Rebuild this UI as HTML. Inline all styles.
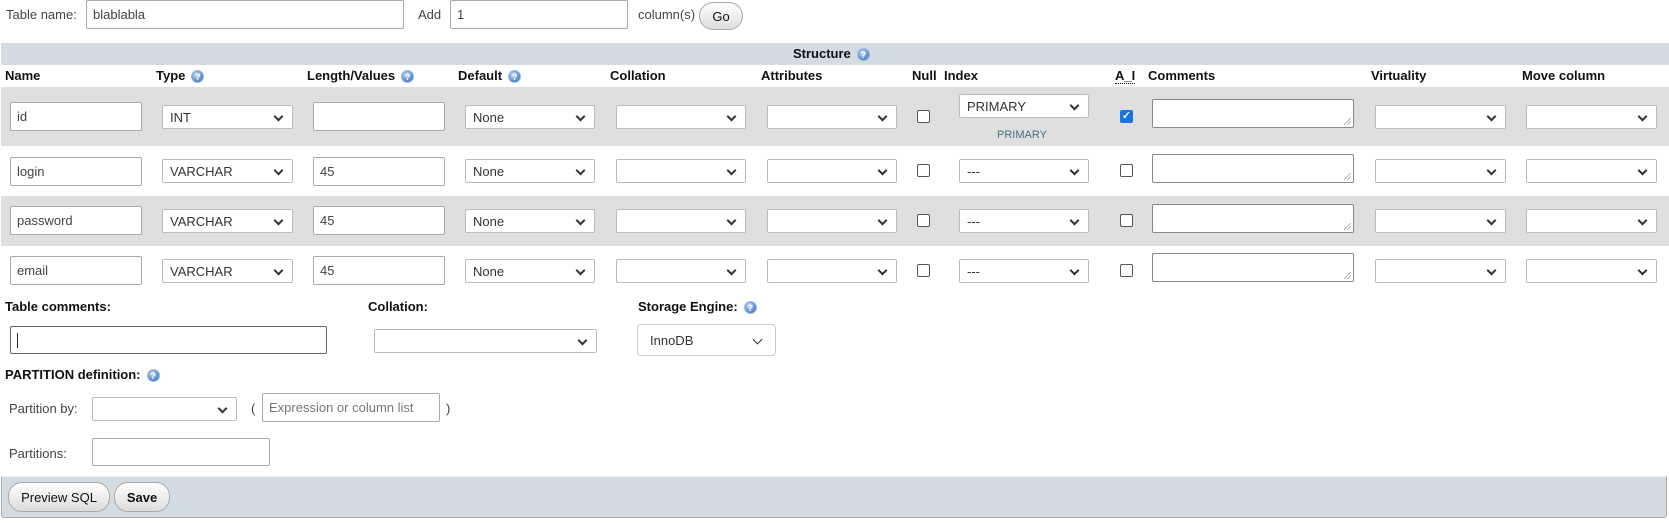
<!DOCTYPE html>
<html><head><meta charset="utf-8">
<style>
*{box-sizing:border-box;margin:0;padding:0}
body{width:1669px;height:523px;background:#fff;font-family:"Liberation Sans",Arial,sans-serif;font-size:13px;color:#222;position:relative;overflow:hidden}
.a{position:absolute}
.in{position:absolute;background:#fff;border:1px solid #aaa;border-radius:2px;padding-left:6px;font-size:13px;color:#444;display:flex;align-items:center}
.sel{position:absolute;background:#fff;border:1px solid #bbb;border-radius:2px;padding-left:7px;font-size:13px;color:#333;display:flex;align-items:center;height:24px}
.sel:after{content:"";position:absolute;right:10px;top:7px;width:5px;height:5px;border-right:2px solid #333;border-bottom:2px solid #333;transform:rotate(45deg)}
.sel.eng:after{top:11px;right:14px;border-width:1.5px;width:6px;height:6px}
.ta{position:absolute;background:#fff;border:1px solid #888;border-radius:2px;width:202px;height:29px}
.ta:after{content:"";position:absolute;right:2px;bottom:2px;width:7px;height:7px;background:linear-gradient(135deg,transparent 45%,#999 45%,#999 52%,transparent 52%,transparent 70%,#999 70%,#999 77%,transparent 77%)}
.cb{position:absolute;width:13px;height:13px;border:1px solid #555;border-radius:2px;background:#fff}
.h{position:absolute;font-weight:bold;font-size:13px;color:#111}
.hi{display:inline-block;width:13px;height:13px;border-radius:50%;background:radial-gradient(circle at 40% 35%,#cfe0f5,#5b8fd0 60%,#3d6fb3);color:#fff;font-size:9px;font-weight:bold;text-align:center;line-height:13px;vertical-align:middle;margin-left:6px;border:1px solid #9fb9dd}
.row{position:absolute;left:1px;width:1668px;background:#dfdfdf}
.btn{position:absolute;border:1px solid #aaa;border-radius:14px;background:linear-gradient(#fff,#ddd);font-size:13px;color:#111;display:flex;align-items:center;justify-content:center}
</style></head><body>

<div class="a" style="left:6px;top:7px;color:#444">Table name:</div>
<div class="in" style="left:86px;top:0;width:318px;height:29px">blablabla</div>
<div class="a" style="left:418px;top:7px;color:#444">Add</div>
<div class="in" style="left:450px;top:0;width:178px;height:29px">1</div>
<div class="a" style="left:638px;top:7px;color:#444">column(s)</div>
<div class="btn" style="left:699px;top:2px;width:44px;height:28px">Go</div>

<div class="a" style="left:1px;top:43px;width:1668px;height:22px;background:#d3dce3"></div>
<div class="h" style="left:793px;top:46px">Structure<span class="hi">?</span></div>

<div class="h" style="left:5px;top:68px">Name</div>
<div class="h" style="left:156px;top:68px">Type<span class="hi">?</span></div>
<div class="h" style="left:307px;top:68px">Length/Values<span class="hi">?</span></div>
<div class="h" style="left:458px;top:68px">Default<span class="hi">?</span></div>
<div class="h" style="left:610px;top:68px">Collation</div>
<div class="h" style="left:761px;top:68px">Attributes</div>
<div class="h" style="left:912px;top:68px">Null</div>
<div class="h" style="left:944px;top:68px">Index</div>
<div class="h" style="left:1115px;top:68px;border-bottom:1px dotted #111">A_I</div>
<div class="h" style="left:1148px;top:68px">Comments</div>
<div class="h" style="left:1371px;top:68px">Virtuality</div>
<div class="h" style="left:1522px;top:68px">Move column</div>

<div class="row" style="top:87px;height:59px"></div>
<div class="row" style="top:196px;height:50px"></div>

<!-- row1 -->
<div class="in" style="left:10px;top:102px;width:132px;height:29px">id</div>
<div class="sel" style="left:162px;top:105px;width:131px">INT</div>
<div class="in" style="left:313px;top:102px;width:132px;height:29px"></div>
<div class="sel" style="left:465px;top:105px;width:130px">None</div>
<div class="sel" style="left:616px;top:105px;width:130px"></div>
<div class="sel" style="left:767px;top:105px;width:130px"></div>
<div class="cb" style="left:917px;top:110px"></div>
<div class="sel" style="left:959px;top:94px;width:130px">PRIMARY</div>
<div class="a" style="left:997px;top:129px;font-size:11px;color:#4a6f80">PRIMARY</div>
<div class="cb" style="left:1120px;top:110px;background:#1a73e8;border-color:#1a73e8;color:#fff;font-size:11px;line-height:11px;text-align:center;font-weight:bold">✓</div>
<div class="ta" style="left:1152px;top:99px"></div>
<div class="sel" style="left:1375px;top:105px;width:131px"></div>
<div class="sel" style="left:1526px;top:105px;width:131px"></div>

<!-- row2 -->
<div class="in" style="left:10px;top:157px;width:132px;height:29px">login</div>
<div class="sel" style="left:162px;top:159px;width:131px">VARCHAR</div>
<div class="in" style="left:313px;top:157px;width:132px;height:29px">45</div>
<div class="sel" style="left:465px;top:159px;width:130px">None</div>
<div class="sel" style="left:616px;top:159px;width:130px"></div>
<div class="sel" style="left:767px;top:159px;width:130px"></div>
<div class="cb" style="left:917px;top:164px"></div>
<div class="sel" style="left:959px;top:159px;width:130px">---</div>
<div class="cb" style="left:1120px;top:164px"></div>
<div class="ta" style="left:1152px;top:154px"></div>
<div class="sel" style="left:1375px;top:159px;width:131px"></div>
<div class="sel" style="left:1526px;top:159px;width:131px"></div>

<!-- row3 -->
<div class="in" style="left:10px;top:206px;width:132px;height:29px">password</div>
<div class="sel" style="left:162px;top:209px;width:131px">VARCHAR</div>
<div class="in" style="left:313px;top:206px;width:132px;height:29px">45</div>
<div class="sel" style="left:465px;top:209px;width:130px">None</div>
<div class="sel" style="left:616px;top:209px;width:130px"></div>
<div class="sel" style="left:767px;top:209px;width:130px"></div>
<div class="cb" style="left:917px;top:214px"></div>
<div class="sel" style="left:959px;top:209px;width:130px">---</div>
<div class="cb" style="left:1120px;top:214px"></div>
<div class="ta" style="left:1152px;top:204px"></div>
<div class="sel" style="left:1375px;top:209px;width:131px"></div>
<div class="sel" style="left:1526px;top:209px;width:131px"></div>

<!-- row4 -->
<div class="in" style="left:10px;top:256px;width:132px;height:29px">email</div>
<div class="sel" style="left:162px;top:259px;width:131px">VARCHAR</div>
<div class="in" style="left:313px;top:256px;width:132px;height:29px">45</div>
<div class="sel" style="left:465px;top:259px;width:130px">None</div>
<div class="sel" style="left:616px;top:259px;width:130px"></div>
<div class="sel" style="left:767px;top:259px;width:130px"></div>
<div class="cb" style="left:917px;top:264px"></div>
<div class="sel" style="left:959px;top:259px;width:130px">---</div>
<div class="cb" style="left:1120px;top:264px"></div>
<div class="ta" style="left:1152px;top:253px"></div>
<div class="sel" style="left:1375px;top:259px;width:131px"></div>
<div class="sel" style="left:1526px;top:259px;width:131px"></div>

<!-- bottom -->
<div class="h" style="left:5px;top:299px">Table comments:</div>
<div class="h" style="left:368px;top:299px">Collation:</div>
<div class="h" style="left:638px;top:299px">Storage Engine:<span class="hi">?</span></div>
<div class="in" style="left:10px;top:326px;width:317px;height:28px;border-color:#666"><span style="display:inline-block;width:1px;height:15px;background:#222"></span></div>
<div class="sel" style="left:374px;top:329px;width:223px"></div>
<div class="sel eng" style="left:637px;top:324px;width:139px;height:32px;border-radius:4px;padding-left:12px;border-color:#ccc">InnoDB</div>
<div class="h" style="left:5px;top:367px">PARTITION definition:<span class="hi">?</span></div>
<div class="a" style="left:9px;top:401px;color:#444">Partition by:</div>
<div class="sel" style="left:92px;top:397px;width:145px"></div>
<div class="a" style="left:251px;top:401px;color:#444">(</div>
<div class="in" style="left:262px;top:393px;width:178px;height:29px;color:#777">Expression or column list</div>
<div class="a" style="left:446px;top:401px;color:#444">)</div>
<div class="a" style="left:9px;top:446px;color:#444">Partitions:</div>
<div class="in" style="left:92px;top:438px;width:178px;height:28px"></div>

<div class="a" style="left:1px;top:476px;width:1666px;height:42px;background:#d3dce3;border:1px solid #aaa;border-top-color:#eee;border-radius:0 0 3px 3px"></div>
<div class="btn" style="left:8px;top:482px;width:102px;height:30px">Preview SQL</div>
<div class="btn" style="left:114px;top:482px;width:56px;height:30px;font-weight:bold">Save</div>
</body></html>
